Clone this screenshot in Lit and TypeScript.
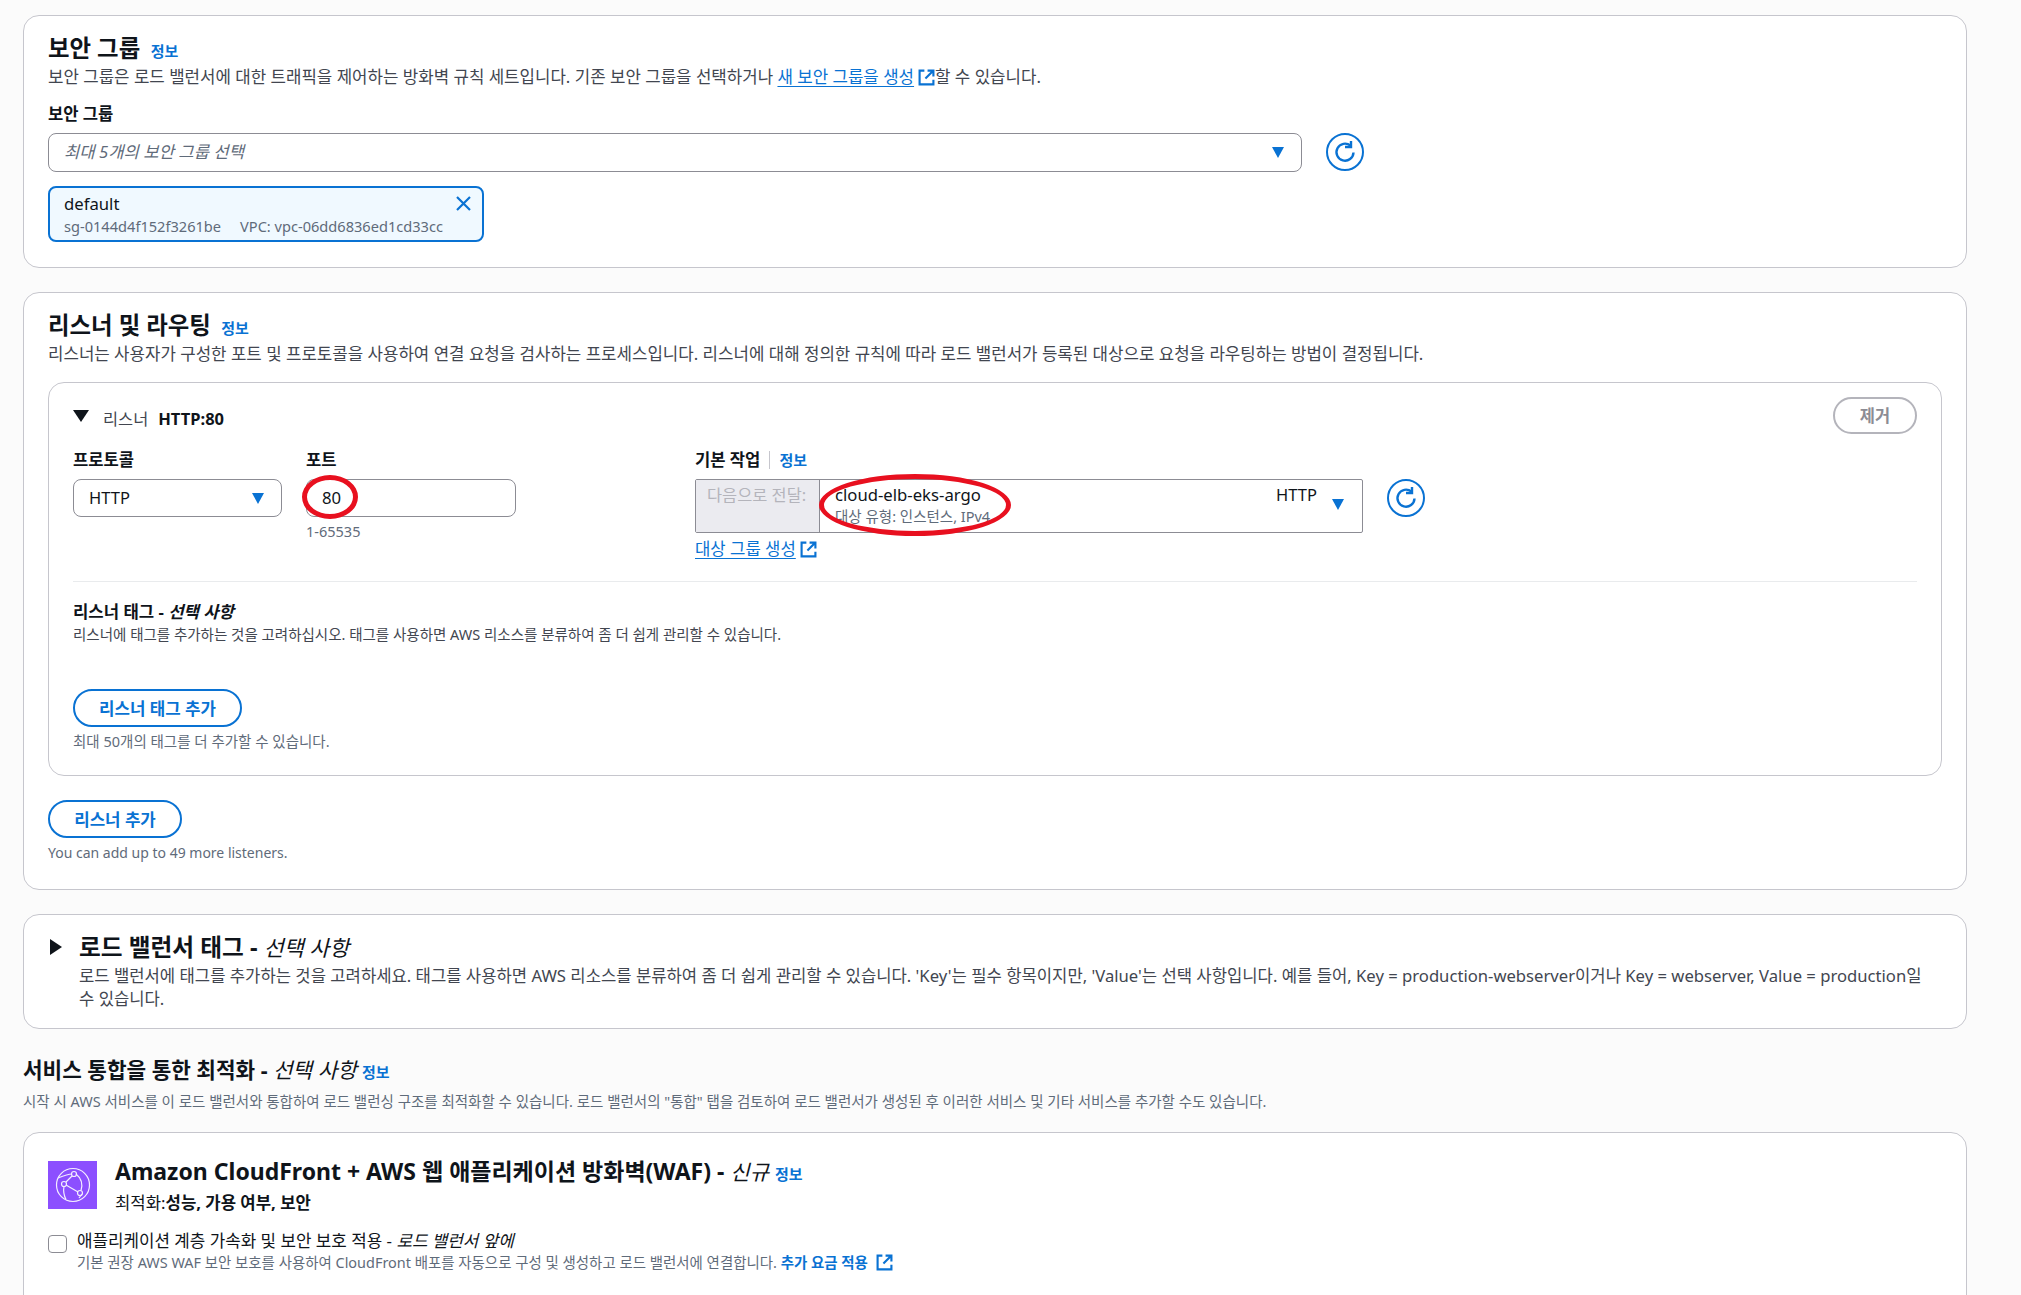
import { LitElement, html, css, svg } from "lit";
import { customElement } from "lit/decorators.js";

const ext = html`<svg class="ext" viewBox="0 0 16 16" fill="none" stroke="#0972d3" stroke-width="2"><path d="M6 1.500H1.500v13h13V10"/><path d="M9 1.500h5.500V7M14.500 1.500L7 9"/></svg>`;
const caret = html`<svg class="caret" viewBox="0 0 14 14"><path d="M1 2h12L7 13z" fill="#0972d3"/></svg>`;
const refresh = html`<svg class="refresh" viewBox="0 0 38 38" fill="none" stroke="#0972d3" stroke-width="2"><circle cx="19" cy="19" r="18"/><path d="M27.500 19.500a8.500 8.500 0 1 1-3-6.800" stroke-width="2.4"/><path d="M25 8v6h-6" stroke-width="2.4"/></svg>`;
const cfIcon = svg`<svg class="cf" viewBox="0 0 49 48" fill="none" stroke="#f4eeff" stroke-width="1.2"><rect width="49" height="48" fill="#8c4fff" stroke="none"/><circle cx="25" cy="24" r="16.5"/><circle cx="26" cy="13" r="2.5"/><circle cx="16" cy="23" r="2.5"/><circle cx="32" cy="32" r="2.5"/><path d="M18 21l6-6M18 24l12 7M28 13c5 4 7 10 5 16.500M16 25.500c-1 5 0 9 2 13M34 33l-3 4M10 17c5-2 10-4 14-4"/></svg>`;

@customElement("app-root")
export class AppRoot extends LitElement {
  static styles = css`
    :host { display: block; height: 1295px; overflow: hidden; background: #fbfbfb; color: #0f141a;
      font-family: "Noto Sans", "Noto Sans CJK KR", sans-serif; font-size: 16.7px; position: relative; }
    * { box-sizing: border-box; }
    .page { padding: 15px 54px 0 23px; display: flex; flex-direction: column; }
    .card { background: #fff; border: 1.5px solid #c6c6cd; border-radius: 16px; padding: 0 24px; }
    .c1 { height: 253px; padding-top: 16px; }
    .c2 { height: 598px; margin-top: 24px; padding-top: 16px; }
    .c3 { height: 115px; margin-top: 24px; padding: 15.5px 40px 0 26px; display: flex; gap: 17px; }
    .c4 { height: 300px; margin-top: 21px; padding-top: 27.5px; }
    h2 { margin: 0; height: 32px; font-size: 23.400px; font-weight: 700; line-height: 32px; display: flex; align-items: baseline; gap: 10.5px; white-space: pre-wrap; }
    h2 i { font-weight: 400; }
    .info { font-size: 15px; font-weight: 700; color: #0972d3; }
    .desc { font-size: 16.8px; line-height: 23.500px; color: #424650; margin-top: 1px; }
    a { color: #0972d3; text-decoration: underline; text-underline-offset: 3px; }
    .ext { width: 17px; height: 17px; vertical-align: -3px; margin-left: 4px; flex: none; }
    label, .lab { display: block; font-size: 16.6px; font-weight: 700; line-height: 20px; }
    .sec { margin-top: 15.5px; }
    .row { display: flex; align-items: center; margin-top: 8.5px; gap: 24px; }
    .sel { height: 39px; border: 1.5px solid #8c8c94; border-radius: 8px; background: #fff; display: flex; align-items: center; justify-content: space-between; padding: 0 16px 0 15px; }
    .sel.w { width: 1254px; }
    .v { font-size: 16.5px; }
    .caret { width: 14px; height: 14px; flex: none; }
    .refresh { width: 38px; height: 38px; flex: none; }
    .ph { font-style: italic; color: #5f6b7a; font-size: 16.7px; margin-top: -2px; }
    .token { margin-top: 14px; width: 436px; height: 56px; border: 2.500px solid #0972d3; border-radius: 8px; background: #f0f9ff; padding: 5px 14px 0; position: relative; }
    .token .t { font-size: 16.7px; line-height: 22px; }
    .token .s { font-size: 14.6px; line-height: 20px; color: #5f6b7a; display: flex; gap: 19px; margin-top: 1px; }
    .x { position: absolute; right: 10.5px; top: 7px; width: 17px; height: 17px; }
    .inner { margin-top: 16.5px; height: 394px; border: 1.5px solid #c6c6cd; border-radius: 16px; padding: 23px 24px 0; position: relative; }
    .lh { display: flex; align-items: center; height: 24px; }
    .tri { width: 16px; height: 12px; margin-right: 14px; flex: none; margin-top: -4px; }
    .lh .a { color: #424650; font-size: 16.4px; margin-right: 10px; }
    .lh b { font-size: 16.5px; }
    .rm { position: absolute; right: 24px; top: 13.5px; width: 84px; height: 37px; border: 2px solid #b4b4bb; border-radius: 19px; color: #8c8c94; font-weight: 700; font-size: 16.5px; display: flex; align-items: center; justify-content: center; background: #fff; }
    .fields { display: flex; margin-top: 19.5px; height: 131px; }
    .f1 { width: 233px; }
    .f2 { width: 389px; }
    .f3 { flex: none; }
    .lab { margin-bottom: 9px; }
    .lab.in { display: flex; align-items: center; }
    .lab .sep { width: 1px; height: 18px; background: #c6c6cd; margin: 0 9px; }
    .sel.h { width: 209px; height: 38px; }
    .input { width: 210px; height: 38px; border: 1.5px solid #8c8c94; border-radius: 8px; padding: 0 15px; display: flex; align-items: center; font-size: 16.7px; }
    .hint { font-size: 14.5px; color: #5f6b7a; line-height: 20px; margin-top: 4px; }
    .act { display: flex; align-items: flex-start; gap: 24px; }
    .group { display: flex; width: 668px; height: 54px; border: 1.5px solid #8c8c94; border-radius: 2px; }
    .fwd { width: 124px; flex: none; background: #ebebf0; border-right: 1.5px solid #8c8c94; color: #b4b4bb; font-size: 16.4px; line-height: 22px; padding: 4px 0 0 11px; }
    .tg { flex: 1; padding: 4.5px 15px 0; display: flex; justify-content: space-between; }
    .tg .n { font-size: 16.7px; line-height: 22px; }
    .tg .m { font-size: 14.5px; line-height: 20px; color: #5f6b7a; }
    .tg .r { display: flex; align-items: flex-start; gap: 14px; font-size: 16.5px; line-height: 22px; }
    .tg .r .caret { margin-top: 13px; margin-right: 2px; }
    .cl { display: block; margin-top: 5px; font-size: 16.7px; line-height: 22px; }
    hr { border: 0; border-top: 1px solid #e9ebed; margin: 0 0 19.5px; }
    .tag-t { font-size: 16.7px; font-weight: 700; line-height: 22px; }
    .sm { font-size: 14.5px; line-height: 22px; color: #424650; }
    .btn { display: inline-flex; align-items: center; justify-content: center; height: 38px; border: 2.500px solid #0972d3; border-radius: 19px; color: #0972d3; font-weight: 700; font-size: 16.8px; background: #fff; }
    .b1 { width: 169px; margin-top: 44px; }
    .b2 { width: 134px; margin-top: 24px; }
    .note { font-size: 14.5px; line-height: 20px; color: #5f6b7a; margin-top: 4px; }
    .note.en { font-size: 14px; margin-top: 5px; }
    .tl { width: 12px; height: 16px; margin-top: 8px; flex: none; }
    .c3 h2 { margin-bottom: 0.5px; font-size: 23.7px; white-space: normal; display: block; }
    .c3 h2 i { font-size: 21.7px; }
    .c3 .desc { font-size: 16.65px; }
    .h3 { margin-top: 26px; height: 30px; font-size: 21.3px; font-weight: 700; line-height: 30px; display: flex; align-items: baseline; gap: 5px; }
    .h3 i { font-weight: 400; }
    .d2 { font-size: 14.5px; line-height: 20px; color: #5f6b7a; margin-top: 6px; }
    .cfrow { display: flex; gap: 18px; }
    .cf { width: 49px; height: 48px; flex: none; }
    .cfrow h2 { margin-top: -6px; font-size: 23px; gap: 6px; }
    .cfrow h2 i { font-size: 21px; }
    .opt { font-size: 16.7px; line-height: 22px; margin-top: 5px; }
    .opt b { font-weight: 700; }
    .chk { display: flex; gap: 10px; margin-top: 16px; }
    .box { width: 19px; height: 18px; border: 1.5px solid #8c8c94; border-radius: 4px; flex: none; margin-top: 5px; }
    .cl1 { font-size: 16.85px; line-height: 22px; }
    .cl2 { font-size: 14.45px; line-height: 22px; color: #5f6b7a; }
    .cl2 b { color: #0972d3; }
    .oval { position: absolute; pointer-events: none; border: 5px solid #e8101f; border-radius: 50%; }
    .o1 { left: 302px; top: 475px; width: 56px; height: 44px; }
    .o2 { left: 819px; top: 474px; width: 192px; height: 62px; }
  `;

  render() {
    return html`
      <div class="page">
        <section class="card c1">
          <h2><span>보안 그룹</span><span class="info">정보</span></h2>
          <div class="desc">보안 그룹은 로드 밸런서에 대한 트래픽을 제어하는 방화벽 규칙 세트입니다. 기존 보안 그룹을 선택하거나 <a href="#">새 보안 그룹을 생성</a>${ext}할 수 있습니다.</div>
          <label class="sec">보안 그룹</label>
          <div class="row">
            <div class="sel w"><span class="ph">최대 5개의 보안 그룹 선택</span>${caret}</div>
            ${refresh}
          </div>
          <div class="token">
            <div class="t">default</div>
            <div class="s"><span>sg-0144d4f152f3261be</span><span>VPC: vpc-06dd6836ed1cd33cc</span></div>
            <svg class="x" viewBox="0 0 17 17" stroke="#0972d3" stroke-width="2.200"><path d="M2 2l13 13M15 2L2 15"/></svg>
          </div>
        </section>

        <section class="card c2">
          <h2><span>리스너 및 라우팅</span><span class="info">정보</span></h2>
          <div class="desc">리스너는 사용자가 구성한 포트 및 프로토콜을 사용하여 연결 요청을 검사하는 프로세스입니다. 리스너에 대해 정의한 규칙에 따라 로드 밸런서가 등록된 대상으로 요청을 라우팅하는 방법이 결정됩니다.</div>
          <div class="inner">
            <div class="lh">
              <svg class="tri" viewBox="0 0 16 12"><path d="M0 0h16L8 12z" fill="#0f141a"/></svg>
              <span class="a">리스너</span><b>HTTP:80</b>
            </div>
            <div class="rm">제거</div>
            <div class="fields">
              <div class="f1"><div class="lab">프로토콜</div><div class="sel h"><span class="v">HTTP</span>${caret}</div></div>
              <div class="f2"><div class="lab">포트</div><div class="input">80</div><div class="hint">1-65535</div></div>
              <div class="f3">
                <div class="lab in">기본 작업<span class="sep"></span><span class="info">정보</span></div>
                <div class="act">
                  <div class="group">
                    <div class="fwd">다음으로 전달:</div>
                    <div class="tg">
                      <div><div class="n">cloud-elb-eks-argo</div><div class="m">대상 유형: 인스턴스, IPv4</div></div>
                      <div class="r"><span>HTTP</span>${caret}</div>
                    </div>
                  </div>
                  ${refresh}
                </div>
                <span class="cl"><a href="#">대상 그룹 생성</a>${ext}</span>
              </div>
            </div>
            <hr />
            <div class="tag-t">리스너 태그 - <i>선택 사항</i></div>
            <div class="sm">리스너에 태그를 추가하는 것을 고려하십시오. 태그를 사용하면 AWS 리소스를 분류하여 좀 더 쉽게 관리할 수 있습니다.</div>
            <div class="btn b1">리스너 태그 추가</div>
            <div class="note">최대 50개의 태그를 더 추가할 수 있습니다.</div>
          </div>
          <div class="btn b2">리스너 추가</div>
          <div class="note en">You can add up to 49 more listeners.</div>
        </section>

        <section class="card c3">
          <svg class="tl" viewBox="0 0 12 16"><path d="M0 0l12 8L0 16z" fill="#0f141a"/></svg>
          <div>
            <h2>로드 밸런서 태그 - <i>선택 사항</i></h2>
            <div class="desc">로드 밸런서에 태그를 추가하는 것을 고려하세요. 태그를 사용하면 AWS 리소스를 분류하여 좀 더 쉽게 관리할 수 있습니다. 'Key'는 필수 항목이지만, 'Value'는 선택 사항입니다. 예를 들어, Key = production-webserver이거나 Key = webserver, Value = production일 수 있습니다.</div>
          </div>
        </section>

        <div class="h3"><span>서비스 통합을 통한 최적화 - <i>선택 사항</i></span><span class="info">정보</span></div>
        <div class="d2">시작 시 AWS 서비스를 이 로드 밸런서와 통합하여 로드 밸런싱 구조를 최적화할 수 있습니다. 로드 밸런서의 "통합" 탭을 검토하여 로드 밸런서가 생성된 후 이러한 서비스 및 기타 서비스를 추가할 수도 있습니다.</div>

        <section class="card c4">
          <div class="cfrow">
            ${cfIcon}
            <div>
              <h2><span>Amazon CloudFront + AWS 웹 애플리케이션 방화벽(WAF) - <i>신규</i></span><span class="info">정보</span></h2>
              <div class="opt">최적화:<b>성능, 가용 여부, 보안</b></div>
            </div>
          </div>
          <div class="chk">
            <div class="box"></div>
            <div>
              <div class="cl1">애플리케이션 계층 가속화 및 보안 보호 적용 - <i>로드 밸런서 앞에</i></div>
              <div class="cl2">기본 권장 AWS WAF 보안 보호를 사용하여 CloudFront 배포를 자동으로 구성 및 생성하고 로드 밸런서에 연결합니다. <b>추가 요금 적용</b> ${ext}</div>
            </div>
          </div>
        </section>
      </div>
      <div class="oval o1"></div>
      <div class="oval o2"></div>
    `;
  }
}
